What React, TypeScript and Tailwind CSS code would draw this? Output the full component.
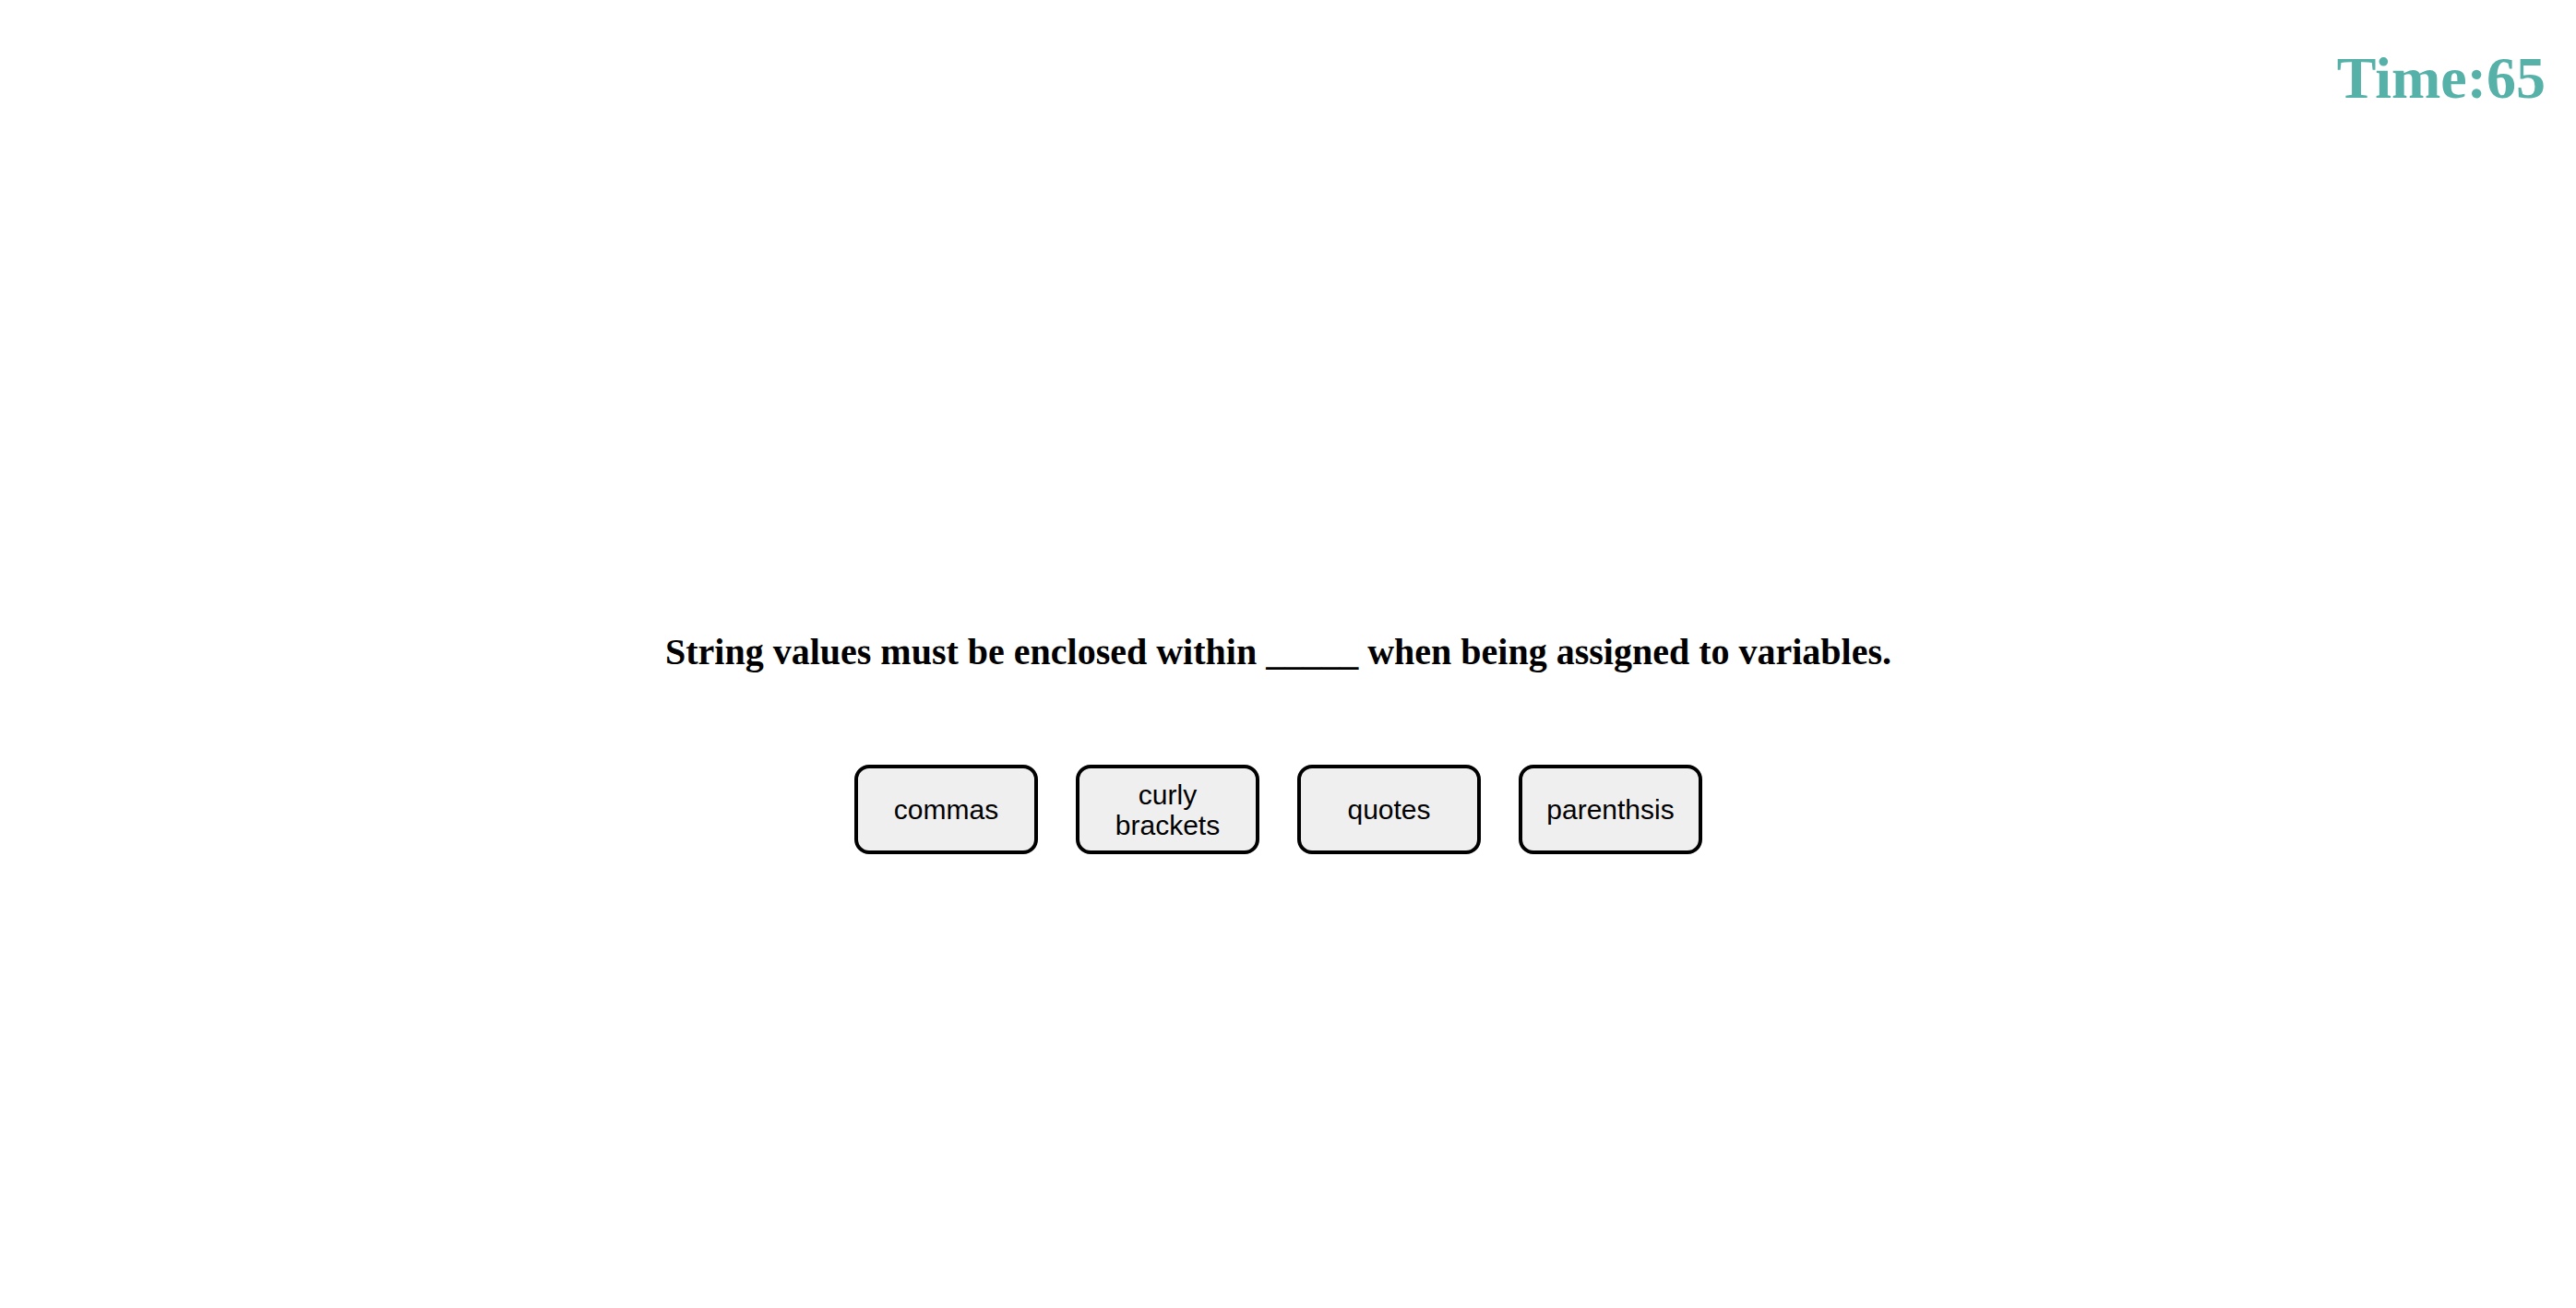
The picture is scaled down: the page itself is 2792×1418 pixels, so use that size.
import { useState } from "react";

const choices = ["commas", "curly brackets", "quotes", "parenthsis"];

export default function App() {
  const [time] = useState(65);

  return (
    <div className="min-h-screen w-full bg-white">
      <header className="flex justify-end pr-[33px] pt-[53px]">
        <p
          className="text-[64px] font-bold leading-[64px] text-[#56b1a9]"
          style={{ fontFamily: '"Liberation Serif", "Times New Roman", serif' }}
        >
          Time:{time}
        </p>
      </header>

      <main className="flex flex-col items-center pr-[21px]">
        <h2
          className="mt-[570px] text-[40px] font-bold leading-[40px] text-black"
          style={{ fontFamily: '"Liberation Serif", "Times New Roman", serif' }}
        >
          String values must be enclosed within _____ when being assigned to variables.
        </h2>

        <div className="mt-[102px] flex gap-[41px]">
          {choices.map((c) => (
            <button
              key={c}
              className="h-[97px] w-[199px] rounded-[16px] border-4 border-black bg-[#efefef] px-4 text-[30px] leading-[33px] text-black"
              style={{ fontFamily: '"Liberation Sans", Arial, sans-serif' }}
            >
              {c}
            </button>
          ))}
        </div>
      </main>
    </div>
  );
}
